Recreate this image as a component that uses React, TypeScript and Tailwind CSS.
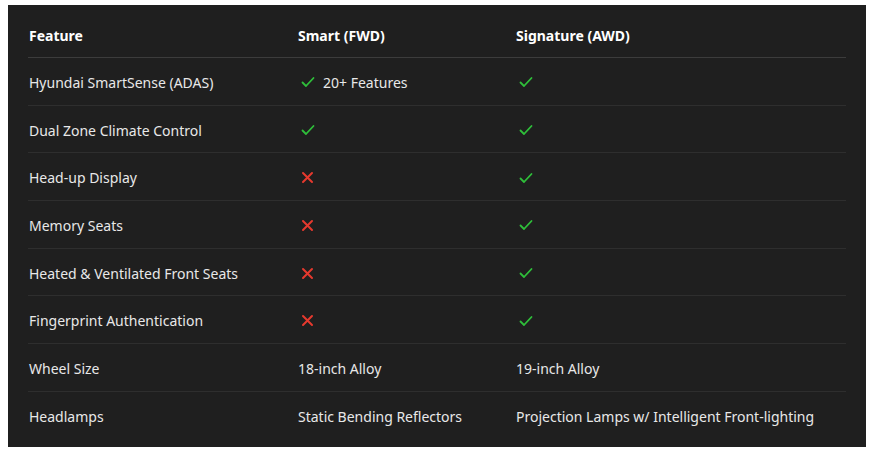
type Cell = string | { mark: "yes" | "no"; text?: string };

const rows: [string, Cell, Cell][] = [
  ["Hyundai SmartSense (ADAS)", { mark: "yes", text: "20+ Features" }, { mark: "yes" }],
  ["Dual Zone Climate Control", { mark: "yes" }, { mark: "yes" }],
  ["Head-up Display", { mark: "no" }, { mark: "yes" }],
  ["Memory Seats", { mark: "no" }, { mark: "yes" }],
  ["Heated & Ventilated Front Seats", { mark: "no" }, { mark: "yes" }],
  ["Fingerprint Authentication", { mark: "no" }, { mark: "yes" }],
  ["Wheel Size", "18-inch Alloy", "19-inch Alloy"],
  ["Headlamps", "Static Bending Reflectors", "Projection Lamps w/ Intelligent Front-lighting"],
];

function Check() {
  return (
    <svg width="14" height="12" viewBox="0 0 14 12" className="shrink-0">
      <path d="M1.5 6.5 L5 10 L12.5 2" fill="none" stroke="#2fbf3a" strokeWidth="1.8" strokeLinecap="round" strokeLinejoin="round" />
    </svg>
  );
}

function Cross() {
  return (
    <svg width="13" height="13" viewBox="0 0 13 13" className="shrink-0">
      <path d="M2 2 L11 11 M11 2 L2 11" fill="none" stroke="#e5392e" strokeWidth="2" strokeLinecap="round" />
    </svg>
  );
}

function Value({ cell }: { cell: Cell }) {
  if (typeof cell === "string") return <span>{cell}</span>;
  return (
    <span className="flex items-center gap-2 pl-[3px]">
      {cell.mark === "yes" ? <Check /> : <Cross />}
      {cell.text && <span>{cell.text}</span>}
    </span>
  );
}

export default function App() {
  return (
    <div className="min-h-screen bg-white pt-[5px] pl-[8px]" style={{ fontFamily: '"Segoe UI", "Noto Sans", "Open Sans", sans-serif' }}>
      <div className="w-[858px] bg-[#1f1f1f] px-[20px] pt-[5px] pb-[7px] text-[14px] text-[#e8e8e8]">
        <div className="grid grid-cols-[270px_218px_1fr] h-[48px] pt-[3px] items-center border-b border-[#3c3c3c] font-bold text-white">
          <span className="pl-px">Feature</span>
          <span>Smart (FWD)</span>
          <span>Signature (AWD)</span>
        </div>
        {rows.map(([name, a, b], i) => (
          <div
            key={name}
            className={`grid grid-cols-[270px_218px_1fr] h-[47.7px] pt-[2px] items-center ${i < rows.length - 1 ? "border-b border-[#2e2e2e]" : ""}`}
          >
            <span className="pl-px">{name}</span>
            <Value cell={a} />
            <Value cell={b} />
          </div>
        ))}
      </div>
    </div>
  );
}
